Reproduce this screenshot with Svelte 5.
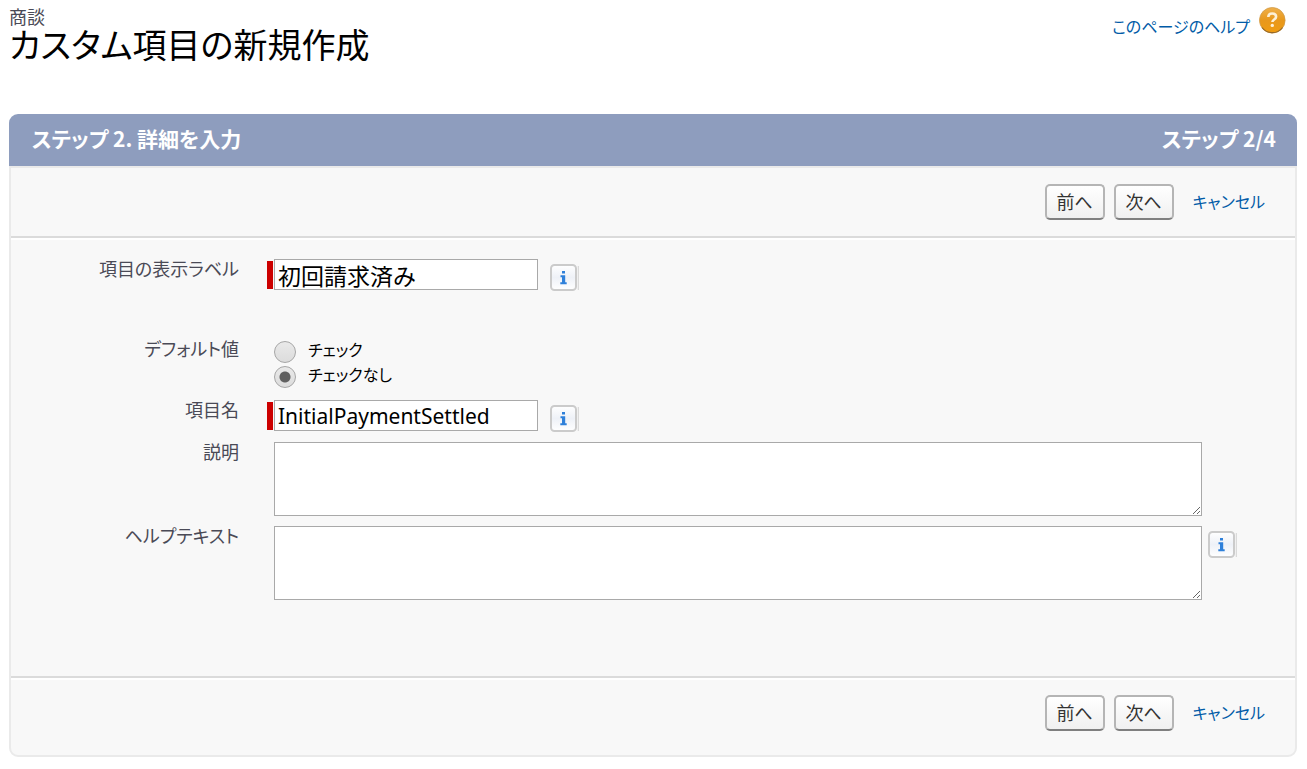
<script>
  let label = $state('初回請求済み');
  let name = $state('InitialPaymentSettled');
  let description = $state('');
  let helpText = $state('');
  let defaultValue = $state('unchecked');
</script>

{#snippet info(title)}
  <button type="button" class="info" aria-label={title}>
    <svg width="29" height="28" viewBox="0 0 29 28" aria-hidden="true">
      <defs>
        <linearGradient id="info-face" x1="0" y1="0" x2="0" y2="1">
          <stop offset="0" stop-color="#fff" />
          <stop offset="0.5" stop-color="#eef1f7" />
          <stop offset="1" stop-color="#fff" />
        </linearGradient>
      </defs>
      <rect x="1" y="1" width="25" height="25" rx="3.5" fill="url(#info-face)" stroke="#cbcbcb" stroke-width="2" />
      <path d="M28.3 2v24" stroke="#d2d2d2" stroke-width="1" />
      <path d="M12 7h3v2.400h-3zM10.500 11.200h4.700v7h1.500v2h-6.400v-2h1.700v-5h-1.500z" fill="#2e80da" />
    </svg>
  </button>
{/snippet}

{#snippet actions()}
  <div class="actions">
    <button type="button" class="btn">前へ</button>
    <button type="button" class="btn">次へ</button>
    <a href="#cancel">キャンセル</a>
  </div>
{/snippet}

<div class="page">
  <header class="page-head">
    <div>
      <p class="entity">商談</p>
      <h1>カスタム項目の新規作成</h1>
    </div>
    <a class="help" href="#help">
      <span>このページのヘルプ</span>
      <svg width="28" height="28" viewBox="0 0 28 28" aria-hidden="true">
        <defs>
          <linearGradient id="help-face" x1="0" y1="0" x2="0" y2="1">
            <stop offset="0" stop-color="#efb04a" />
            <stop offset="0.5" stop-color="#e8981c" />
            <stop offset="1" stop-color="#f09c10" />
          </linearGradient>
        </defs>
        <circle cx="14.300" cy="14.300" r="12.800" fill="url(#help-face)" stroke="#d09a48" stroke-width="0.800" />
        <path d="M4 21.500a12.800 12.800 0 0 0 20.600 0" fill="none" stroke="#94692c" stroke-width="1.200" />
        <path d="M10.300 11C10.400 8.600 11.900 7.500 14.200 7.500s3.900 1.200 3.900 3.200c0 2.900-3.700 2.700-3.700 5.400" fill="none" stroke="#fdf0d6" stroke-width="2.600" />
        <circle cx="14.300" cy="19.400" r="1.700" fill="#fdf0d6" />
      </svg>
    </a>
  </header>

  <main>
    <div class="bar">
      <h2>ステップ 2. 詳細を入力</h2>
      <h2>ステップ 2/4</h2>
    </div>
    <form class="panel">
      {@render actions()}
      <div class="fields">
        <div class="row spaced">
          <label for="field-label">項目の表示ラベル</label>
          <div class="control required">
            <input id="field-label" class="text" type="text" bind:value={label} />
            {@render info('項目の表示ラベル')}
          </div>
        </div>
        <div class="row" role="radiogroup" aria-labelledby="default-label">
          <span id="default-label" class="label">デフォルト値</span>
          <div class="control choices">
            <label class="choice"><input type="radio" value="checked" bind:group={defaultValue} />チェック</label>
            <label class="choice"><input type="radio" value="unchecked" bind:group={defaultValue} />チェックなし</label>
          </div>
        </div>
        <div class="row">
          <label for="field-name">項目名</label>
          <div class="control required">
            <input id="field-name" class="text latin" type="text" bind:value={name} />
            {@render info('項目名')}
          </div>
        </div>
        <div class="row">
          <label for="field-description">説明</label>
          <div class="control area">
            <textarea id="field-description" bind:value={description}></textarea>
          </div>
        </div>
        <div class="row">
          <label for="field-help">ヘルプテキスト</label>
          <div class="control area">
            <textarea id="field-help" bind:value={helpText}></textarea>
            {@render info('ヘルプテキスト')}
          </div>
        </div>
      </div>
      {@render actions()}
    </form>
  </main>
</div>

<style>
  :global(body) {
    margin: 0;
    background: #fff;
  }
  .page {
    box-sizing: border-box;
    padding: 6px 10px 12px 9px;
    font-family: 'Noto Sans CJK JP', sans-serif;
    font-size: 18px;
    line-height: 24px;
    font-feature-settings: 'palt';
    color: #000;
  }
  .page * {
    box-sizing: border-box;
  }
  p, h1, h2 {
    margin: 0;
  }
  a {
    color: #015ba7;
    font-size: 16px;
    text-decoration: none;
  }
  .page-head {
    display: flex;
    justify-content: space-between;
    align-items: flex-start;
    height: 108px;
  }
  .entity {
    color: #4a4a56;
    line-height: 20px;
  }
  h1 {
    font-size: 34px;
    font-weight: 400;
    line-height: 36px;
  }
  .help {
    display: flex;
    align-items: flex-start;
    gap: 8px;
    padding-right: 11px;
  }
  .help span {
    padding-top: 8px;
  }
  .bar {
    display: flex;
    justify-content: space-between;
    align-items: center;
    height: 52px;
    padding: 0 21px 4px 23px;
    border-radius: 9px 9px 0 0;
    background: #8e9dbe;
    color: #fff;
  }
  h2 {
    font-size: 21px;
    font-weight: 700;
    line-height: 28px;
  }
  .panel {
    border: 2px solid #eaeaea;
    border-radius: 0 0 9px 9px;
    background: #f8f8f8;
  }
  .actions {
    display: flex;
    justify-content: flex-end;
    align-items: center;
    height: 68px;
    padding-right: 30px;
  }
  .actions:last-child {
    height: 77px;
    padding-bottom: 7px;
  }
  .actions a {
    margin-left: 10px;
    padding-bottom: 2px;
  }
  .btn {
    width: 60px;
    height: 36px;
    margin-right: 9px;
    padding: 0 0 2px;
    border: 2px solid #b5b5b5;
    border-bottom-color: #7f7f7f;
    border-radius: 5px;
    background: linear-gradient(#fff, #f0f0f0);
    color: #333;
    font: inherit;
    font-feature-settings: inherit;
  }
  .fields {
    display: grid;
    gap: 10px;
    padding: 21px 58px 76px 0;
    border-top: 2px solid #dbdbdb;
    border-bottom: 2px solid #dbdbdb;
    box-shadow: inset 0 2px #fff, 0 2px #fff;
  }
  .row {
    display: grid;
    grid-template-columns: 228px 1fr;
    column-gap: 28px;
  }
  .row > label,
  .row > .label {
    color: #4a4a56;
    text-align: right;
    line-height: 18px;
  }
  .spaced {
    margin-bottom: 38px;
  }
  .control {
    display: flex;
    align-items: flex-start;
    padding-left: 7px;
  }
  .required {
    padding-left: 0;
  }
  .required::before {
    content: '';
    width: 6px;
    height: 28px;
    margin: 2px 1px 0 0;
    background: #c00;
  }
  .text {
    width: 264px;
    height: 31px;
    margin-right: 12px;
    padding: 0 3px;
    border: 1px solid #a9a9a9;
    border-radius: 0;
    background: #fff;
    color: #000;
    font: inherit;
    font-size: 23px;
    outline: 0;
  }
  .latin {
    font-family: 'Noto Sans', sans-serif;
    font-size: 21px;
  }
  .info {
    display: block;
    flex: none;
    height: 28px;
    margin-top: 5px;
    padding: 0;
    border: 0;
    background: none;
  }
  .required .info {
    margin-bottom: -1px;
  }
  .info svg {
    display: block;
  }
  .choices {
    flex-direction: column;
    padding-bottom: 1px;
  }
  .choice {
    display: flex;
    align-items: flex-start;
    gap: 12px;
    height: 25px;
    font-size: 16px;
    line-height: 20px;
  }
  .choice input {
    width: 22px;
    height: 22px;
    margin: 2px 0 0;
    appearance: none;
    border: 1px solid #a6a6a6;
    border-radius: 50%;
    background: linear-gradient(#e9e9e9, #dcdcdc);
  }
  .choice input:checked {
    background: radial-gradient(circle, #606060 5px, transparent 6px), linear-gradient(#e9e9e9, #dcdcdc);
  }
  .area {
    gap: 6px;
    padding-right: 35px;
  }
  .area:has(.info) {
    padding-right: 0;
  }
  textarea {
    flex: 1;
    min-width: 0;
    height: 74px;
    padding: 4px;
    border: 1px solid #a9a9a9;
    background: #fff;
    font: inherit;
    resize: vertical;
    outline: 0;
  }
</style>
